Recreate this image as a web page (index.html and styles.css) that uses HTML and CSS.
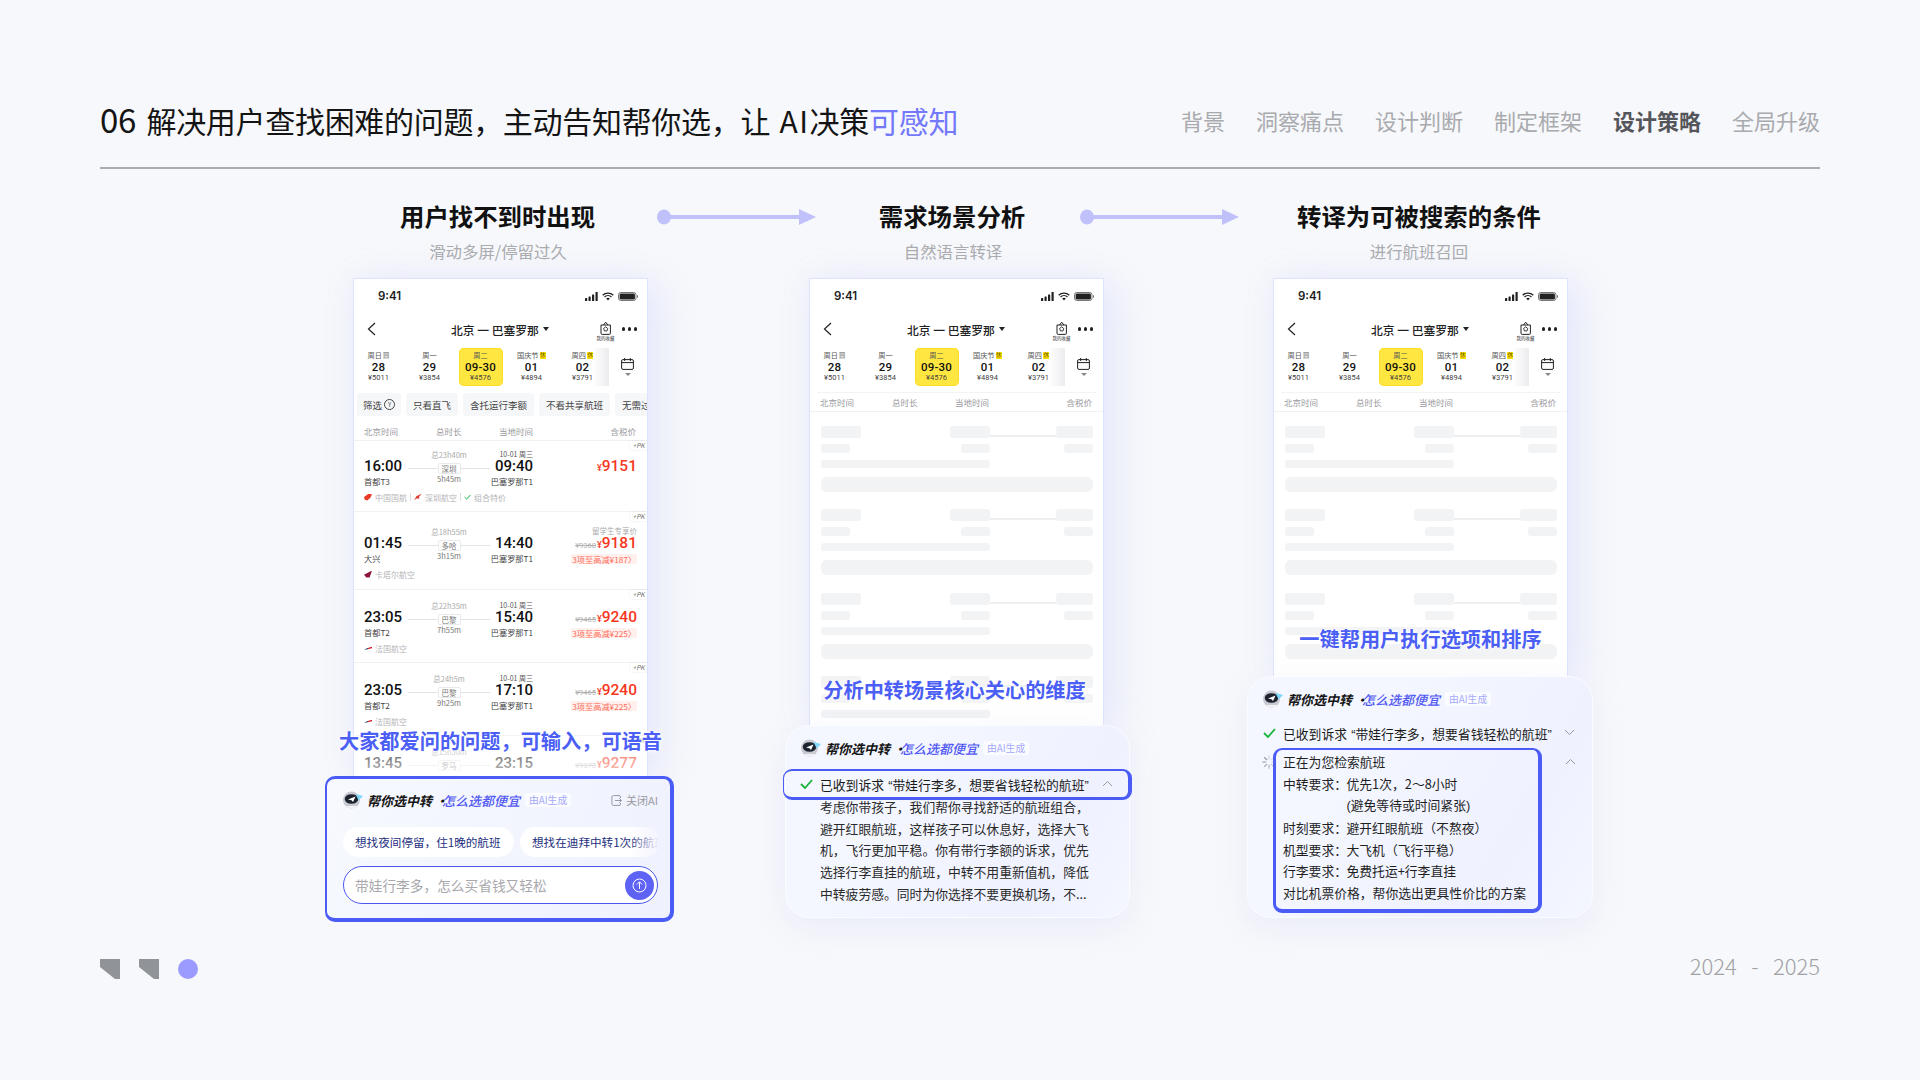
FILE: index.html
```html
<!DOCTYPE html>
<html lang="zh-CN">
<head>
<meta charset="utf-8">
<title>解决用户查找困难的问题</title>
<link rel="stylesheet" href="styles.css">
</head>
<body>
<svg class="defs" aria-hidden="true">
  <symbol id="i-back" viewBox="0 0 9 14"><path d="M8 1 1.5 7 8 13" fill="none" stroke="#222" stroke-width="1.2"/></symbol>
  <symbol id="i-signal" viewBox="0 0 13 9"><rect x="0" y="6" width="2.2" height="3" rx=".5" fill="#222"/><rect x="3.5" y="4.5" width="2.2" height="4.5" rx=".5" fill="#222"/><rect x="7" y="2.5" width="2.2" height="6.5" rx=".5" fill="#222"/><rect x="10.5" y="0" width="2.2" height="9" rx=".5" fill="#222"/></symbol>
  <symbol id="i-wifi" viewBox="0 0 12 9"><path d="M.7 3.2a7.6 7.6 0 0 1 10.6 0M2.5 5a5 5 0 0 1 7 0" fill="none" stroke="#222" stroke-width="1.3"/><path d="M4.2 6.6a2.6 2.6 0 0 1 3.6 0L6 8.6z" fill="#222"/></symbol>
  <symbol id="i-batt" viewBox="0 0 20 9"><rect x=".5" y=".5" width="17.5" height="8" rx="2.2" fill="none" stroke="#777"/><rect x="1.6" y="1.6" width="15.3" height="5.8" rx="1.2" fill="#222"/><path d="M19 3v3a1.6 1.6 0 0 0 0-3z" fill="#777"/></symbol>
  <symbol id="i-bag" viewBox="0 0 11 14"><path d="M1 4h9.4v8.2a1.2 1.2 0 0 1-1.2 1.2H2.2A1.2 1.2 0 0 1 1 12.200zM3.500 4 5.700 1.200 7.900 4" fill="none" stroke="#222" stroke-width="1"/><path d="m5.700 5.800 2 1.600-.7 2.500H4.400l-.7-2.500z" fill="none" stroke="#222" stroke-width=".9"/></symbol>
  <symbol id="i-cal" viewBox="0 0 13 12"><rect x=".6" y="1.600" width="11.800" height="9.800" rx="1.400" fill="none" stroke="#222" stroke-width="1"/><path d="M.6 4.600h11.800M3.700 0v3M9.300 0v3" stroke="#222" stroke-width="1" fill="none"/></symbol>
  <symbol id="i-robot" viewBox="0 0 20 18">
    <circle cx="8.500" cy="9" r="8.500" fill="#c9c9d1"/>
    <path d="M3 15a8.300 8.300 0 0 0 11.500 0z" fill="#f3f3f6"/>
    <ellipse cx="8.500" cy="8" rx="6.800" ry="4.800" fill="#1d2430"/>
    <path d="M5 8.500 12.500 5.500 10 11 8.500 9.200z" fill="#fff"/>
    <path d="M12.500 3 20 5 15.500 9.500 14 6z" fill="#7fd6fb"/>
  </symbol>
  <symbol id="i-check" viewBox="0 0 13 10"><path d="m1 5 4 4 7-8" fill="none" stroke="#17b33b" stroke-width="1.800"/></symbol>
  <symbol id="i-up" viewBox="0 0 11 7"><path d="m1 6 4.500-4.500L10 6" fill="none" stroke="#999" stroke-width="1"/></symbol>
  <symbol id="i-down" viewBox="0 0 11 7"><path d="m1 1 4.500 4.500L10 1" fill="none" stroke="#999" stroke-width="1"/></symbol>
  <symbol id="i-arrow" viewBox="0 0 159 16"><ellipse cx="7" cy="8" rx="7" ry="7.500" fill="#c0c1fb"/><rect x="7" y="6" width="136" height="4" fill="#c0c1fb"/><path d="M142 0 159 8 142 16z" fill="#c0c1fb"/></symbol>
  <symbol id="i-close" viewBox="0 0 11 11"><path d="M9.500 3V2A1.500 1.500 0 0 0 8 .6H2.400A1.500 1.500 0 0 0 .9 2v7a1.500 1.500 0 0 0 1.500 1.400H8A1.500 1.500 0 0 0 9.500 9V8" fill="none" stroke="#9a9aa0"/><path d="M4 5.500h6.500M8.300 3.500l2.200 2-2.200 2" fill="none" stroke="#9a9aa0"/></symbol>
</svg>

<main class="slide">
  <header class="top">
    <h1 class="heading"><span class="num">06</span> 解决用户查找困难的问题，主动告知帮你选，让 <span class="ai">AI</span>决策<em>可感知</em></h1>
    <nav class="tabs">
      <span>背景</span><span>洞察痛点</span><span>设计判断</span><span>制定框架</span><span class="tab-on">设计策略</span><span>全局升级</span>
    </nav>
  </header>

  <section class="steps">
    <div class="step step-a"><h2>用户找不到时出现</h2><p>滑动多屏/停留过久</p></div>
    <svg class="arrow arrow-a"><use href="#i-arrow"/></svg>
    <div class="step step-b"><h2>需求场景分析</h2><p>自然语言转译</p></div>
    <svg class="arrow arrow-b"><use href="#i-arrow"/></svg>
    <div class="step step-c"><h2>转译为可被搜索的条件</h2><p>进行航班召回</p></div>
  </section>

  <section class="stage">
    <!-- column 1 -->
    <div class="col col-a">
      <div class="phone-wrap">
        <div class="phone phone-a">
          <div class="status"><b>9:41</b><span class="status-icons"><svg class="ic-signal"><use href="#i-signal"/></svg><svg class="ic-wifi"><use href="#i-wifi"/></svg><svg class="ic-batt"><use href="#i-batt"/></svg></span></div>
          <div class="navbar"><svg class="ic-back"><use href="#i-back"/></svg><div class="route-title">北京 一 巴塞罗那<i class="tri"></i></div><div class="fav"><svg class="ic-bag"><use href="#i-bag"/></svg><small>我的收藏</small></div><div class="dots"><i></i><i></i><i></i></div></div>
          <div class="dates">
            <div class="day"><span>周日<u class="off">回</u></span><b>28</b><em>¥5011</em></div>
            <div class="day"><span>周一</span><b>29</b><em>¥3854</em></div>
            <div class="day day-on"><span>周二</span><b>09-30</b><em>¥4576</em></div>
            <div class="day"><span>国庆节<u class="rest">休</u></span><b>01</b><em>¥4894</em></div>
            <div class="day"><span>周四<u class="rest">休</u></span><b>02</b><em>¥3791</em></div>
            <div class="cal"><svg class="ic-cal"><use href="#i-cal"/></svg><i class="tri tri-grey"></i></div>
          </div>
          <div class="filters">
            <span class="chip chip-first">筛选<i class="ring">Y</i></span><span class="chip">只看直飞</span><span class="chip">含托运行李额</span><span class="chip">不看共享航班</span><span class="chip">无需过境签</span>
          </div>
          <div class="thead thead-a"><span>北京时间</span><span>总时长</span><span>当地时间</span><span class="r">含税价</span></div>

          <div class="flight f-first">
            <i class="pk">+PK</i>
            <span class="depart">16:00</span><span class="dep-sub">首都T3</span>
            <div class="mid"><span>总23h40m</span><div class="route"><u>深圳</u></div><span>5h45m</span></div>
            <span class="arr-date">10-01 周三</span><span class="arrive">09:40</span><span class="arr-sub">巴塞罗那T1</span>
            <div class="price price-solo"><em>¥</em><b>9151</b></div>
            <div class="air"><i class="logo logo-ca"></i>中国国航<s></s><i class="logo logo-zh"></i>深圳航空<s></s><svg class="ic-tick"><use href="#i-check"/></svg>组合特价</div>
          </div>
          <div class="flight f-tall">
            <i class="pk">+PK</i>
            <span class="depart">01:45</span><span class="dep-sub">大兴</span>
            <div class="mid"><span>总18h55m</span><div class="route"><u>多哈</u></div><span>3h15m</span></div>
            <span class="arrive">14:40</span><span class="arr-sub">巴塞罗那T1</span>
            <span class="price-note">留学生专享价</span>
            <div class="price"><del>¥9368</del><em>¥</em><b>9181</b></div>
            <span class="promo">3项至高减¥187〉</span>
            <div class="air"><i class="logo logo-qr"></i>卡塔尔航空</div>
          </div>
          <div class="flight">
            <i class="pk">+PK</i>
            <span class="depart">23:05</span><span class="dep-sub">首都T2</span>
            <div class="mid"><span>总22h35m</span><div class="route"><u>巴黎</u></div><span>7h55m</span></div>
            <span class="arr-date">10-01 周三</span><span class="arrive">15:40</span><span class="arr-sub">巴塞罗那T1</span>
            <div class="price"><del>¥9465</del><em>¥</em><b>9240</b></div>
            <span class="promo">3项至高减¥225〉</span>
            <div class="air"><i class="logo logo-af"></i>法国航空</div>
          </div>
          <div class="flight">
            <i class="pk">+PK</i>
            <span class="depart">23:05</span><span class="dep-sub">首都T2</span>
            <div class="mid"><span>总24h5m</span><div class="route"><u>巴黎</u></div><span>9h25m</span></div>
            <span class="arr-date">10-01 周三</span><span class="arrive">17:10</span><span class="arr-sub">巴塞罗那T1</span>
            <div class="price"><del>¥9465</del><em>¥</em><b>9240</b></div>
            <span class="promo">3项至高减¥225〉</span>
            <div class="air"><i class="logo logo-af"></i>法国航空</div>
          </div>
          <div class="flight">
            <i class="pk">+PK</i>
            <span class="depart">13:45</span>
            <div class="mid"><span>总15h30m</span><div class="route"><u>罗马</u></div></div>
            <span class="arrive">23:15</span>
            <div class="price"><del>¥9372</del><em>¥</em><b>9277</b></div>
          </div>
        </div>
        <p class="caption">大家都爱问的问题，可输入，可语音</p>
      </div>
      <div class="panel panel-a">
        <div class="ai-head">
          <svg class="ic-robot"><use href="#i-robot"/></svg>
          <strong>帮你选中转 ·</strong><strong class="hl">怎么选都便宜</strong><span class="ai-tag">由AI生成</span>
          <span class="close"><svg class="ic-close"><use href="#i-close"/></svg>关闭AI</span>
        </div>
        <div class="asks">
          <span class="ask ask-one">想找夜间停留，住1晚的航班</span>
          <span class="ask ask-two">想找在迪拜中转1次的航班</span>
        </div>
        <div class="input">
          <span>带娃行李多，怎么买省钱又轻松</span>
          <svg class="send" viewBox="0 0 29 29"><circle cx="14.500" cy="14.500" r="14.500" fill="#5e62f5"/><circle cx="14.500" cy="14.500" r="6.500" fill="none" stroke="#fff" stroke-width="1"/><path d="M14.500 18v-7M11.800 13.500l2.700-2.700 2.700 2.700" fill="none" stroke="#fff" stroke-width="1"/></svg>
        </div>
      </div>
    </div>

    <!-- column 2 -->
    <div class="col col-b">
      <div class="phone-wrap">
        <div class="phone phone-b">
          <div class="status"><b>9:41</b><span class="status-icons"><svg class="ic-signal"><use href="#i-signal"/></svg><svg class="ic-wifi"><use href="#i-wifi"/></svg><svg class="ic-batt"><use href="#i-batt"/></svg></span></div>
          <div class="navbar"><svg class="ic-back"><use href="#i-back"/></svg><div class="route-title">北京 一 巴塞罗那<i class="tri"></i></div><div class="fav"><svg class="ic-bag"><use href="#i-bag"/></svg><small>我的收藏</small></div><div class="dots"><i></i><i></i><i></i></div></div>
          <div class="dates">
            <div class="day"><span>周日<u class="off">回</u></span><b>28</b><em>¥5011</em></div>
            <div class="day"><span>周一</span><b>29</b><em>¥3854</em></div>
            <div class="day day-on"><span>周二</span><b>09-30</b><em>¥4576</em></div>
            <div class="day"><span>国庆节<u class="rest">休</u></span><b>01</b><em>¥4894</em></div>
            <div class="day"><span>周四<u class="rest">休</u></span><b>02</b><em>¥3791</em></div>
            <div class="cal"><svg class="ic-cal"><use href="#i-cal"/></svg><i class="tri tri-grey"></i></div>
          </div>
          <div class="rule"></div>
          <div class="thead"><span>北京时间</span><span>总时长</span><span>当地时间</span><span class="r">含税价</span></div>
          <div class="skeletons">
            <div class="sk"><div class="sk-top"><i class="a"></i><i class="b"></i><i class="ln"></i><i class="c"></i></div><div class="sk-mid"><i class="a"></i><i class="b"></i><i class="c"></i></div><i class="sk-line"></i><i class="sk-big"></i></div>
            <div class="sk"><div class="sk-top"><i class="a"></i><i class="b"></i><i class="ln"></i><i class="c"></i></div><div class="sk-mid"><i class="a"></i><i class="b"></i><i class="c"></i></div><i class="sk-line"></i><i class="sk-big"></i></div>
            <div class="sk"><div class="sk-top"><i class="a"></i><i class="b"></i><i class="ln"></i><i class="c"></i></div><div class="sk-mid"><i class="a"></i><i class="b"></i><i class="c"></i></div><i class="sk-line"></i><i class="sk-big"></i></div>
            <div class="sk"><div class="sk-top"><i class="a"></i><i class="b"></i><i class="ln"></i><i class="c"></i></div><div class="sk-mid"><i class="a"></i><i class="b"></i><i class="c"></i></div><i class="sk-line"></i><i class="sk-big"></i></div>
          </div>
        </div>
        <p class="caption caption-b">分析中转场景核心关心的维度</p>
      </div>
      <div class="panel panel-b">
        <div class="ai-head">
          <svg class="ic-robot"><use href="#i-robot"/></svg>
          <strong>帮你选中转 ·</strong><strong class="hl">怎么选都便宜</strong><span class="ai-tag">由AI生成</span>
        </div>
        <div class="got got-box">
          <svg class="ic-check"><use href="#i-check"/></svg>
          <span>已收到诉求<span class="qm qm-o">“</span>带娃行李多，想要省钱轻松的航班<span class="qm">”</span></span>
          <svg class="ic-chev"><use href="#i-up"/></svg>
        </div>
        <p class="answer">考虑你带孩子，我们帮你寻找舒适的航班组合，<br>避开红眼航班，这样孩子可以休息好，选择大飞<br>机，飞行更加平稳。你有带行李额的诉求，优先<br>选择行李直挂的航班，中转不用重新值机，降低<br>中转疲劳感。同时为你选择不要更换机场，不...</p>
      </div>
    </div>

    <!-- column 3 -->
    <div class="col col-c">
      <div class="phone-wrap">
        <div class="phone phone-c">
          <div class="status"><b>9:41</b><span class="status-icons"><svg class="ic-signal"><use href="#i-signal"/></svg><svg class="ic-wifi"><use href="#i-wifi"/></svg><svg class="ic-batt"><use href="#i-batt"/></svg></span></div>
          <div class="navbar"><svg class="ic-back"><use href="#i-back"/></svg><div class="route-title">北京 一 巴塞罗那<i class="tri"></i></div><div class="fav"><svg class="ic-bag"><use href="#i-bag"/></svg><small>我的收藏</small></div><div class="dots"><i></i><i></i><i></i></div></div>
          <div class="dates">
            <div class="day"><span>周日<u class="off">回</u></span><b>28</b><em>¥5011</em></div>
            <div class="day"><span>周一</span><b>29</b><em>¥3854</em></div>
            <div class="day day-on"><span>周二</span><b>09-30</b><em>¥4576</em></div>
            <div class="day"><span>国庆节<u class="rest">休</u></span><b>01</b><em>¥4894</em></div>
            <div class="day"><span>周四<u class="rest">休</u></span><b>02</b><em>¥3791</em></div>
            <div class="cal"><svg class="ic-cal"><use href="#i-cal"/></svg><i class="tri tri-grey"></i></div>
          </div>
          <div class="rule"></div>
          <div class="thead"><span>北京时间</span><span>总时长</span><span>当地时间</span><span class="r">含税价</span></div>
          <div class="skeletons">
            <div class="sk"><div class="sk-top"><i class="a"></i><i class="b"></i><i class="ln"></i><i class="c"></i></div><div class="sk-mid"><i class="a"></i><i class="b"></i><i class="c"></i></div><i class="sk-line"></i><i class="sk-big"></i></div>
            <div class="sk"><div class="sk-top"><i class="a"></i><i class="b"></i><i class="ln"></i><i class="c"></i></div><div class="sk-mid"><i class="a"></i><i class="b"></i><i class="c"></i></div><i class="sk-line"></i><i class="sk-big"></i></div>
            <div class="sk"><div class="sk-top"><i class="a"></i><i class="b"></i><i class="ln"></i><i class="c"></i></div><div class="sk-mid"><i class="a"></i><i class="b"></i><i class="c"></i></div><i class="sk-line"></i><i class="sk-big"></i></div>
          </div>
        </div>
        <p class="caption caption-c">一键帮用户执行选项和排序</p>
      </div>
      <div class="panel panel-c">
        <div class="ai-head">
          <svg class="ic-robot"><use href="#i-robot"/></svg>
          <strong>帮你选中转 ·</strong><strong class="hl">怎么选都便宜</strong><span class="ai-tag">由AI生成</span>
        </div>
        <div class="got">
          <svg class="ic-check"><use href="#i-check"/></svg>
          <span>已收到诉求<span class="qm qm-o">“</span>带娃行李多，想要省钱轻松的航班<span class="qm">”</span></span>
          <svg class="ic-chev"><use href="#i-down"/></svg>
        </div>
        <div class="search">
          <svg class="spinner" viewBox="0 0 14 14"><g stroke="#8a8a92" stroke-width="1.200" stroke-linecap="round"><path d="M7 .8v3" opacity=".35"/><path d="m11.400 2.600-2.100 2.100" opacity=".25"/><path d="M13.200 7h-3" opacity=".3"/><path d="m11.400 11.400-2.100-2.100" opacity=".45"/><path d="M7 13.200v-3" opacity=".6"/><path d="m2.600 11.400 2.100-2.100" opacity=".75"/><path d="M.8 7h3" opacity=".9"/><path d="m2.600 2.600 2.100 2.100"/></g></svg>
          <div class="search-box">
            <p>正在为您检索航班</p>
            <p><span class="k">中转要求：</span>优先1次，2～8小时</p>
            <p><span class="k"></span><span class="paren">(</span>避免等待或时间紧张<span class="paren">)</span></p>
            <p><span class="k">时刻要求：</span>避开红眼航班（不熬夜）</p>
            <p><span class="k">机型要求：</span>大飞机（飞行平稳）</p>
            <p><span class="k">行李要求：</span>免费托运+行李直挂</p>
            <p>对比机票价格，帮你选出更具性价比的方案</p>
          </div>
          <svg class="ic-chev ic-chev-search"><use href="#i-up"/></svg>
        </div>
      </div>
    </div>
  </section>

  <footer class="foot">
    <div class="marks"><i class="mark"></i><i class="mark"></i><i class="mark-dot"></i></div>
    <span class="years">2024 - 2025</span>
  </footer>
</main>
</body>
</html>
```

FILE: styles.css
```css
* { box-sizing: border-box; }
html, body { margin: 0; padding: 0; }
body {
  width: 1920px;
  height: 1080px;
  overflow: hidden;
  background: #f7f8fb;
  color: #111;
  font-family: "Noto Sans CJK SC", "Noto Sans", sans-serif;
}
h1, h2, p { margin: 0; font-weight: 400; }
i, em, u { font-style: normal; text-decoration: none; }
.defs { position: absolute; width: 0; height: 0; }

.slide { padding: 98px 100px 0; }

/* header */
.top {
  display: flex;
  justify-content: space-between;
  align-items: center;
  height: 71px;
  padding-bottom: 25px;
  border-bottom: 2px solid #abacb0;
}
.heading { height: 44px; font-size: 30px; line-height: 44px; color: #141414; white-space: nowrap; font-weight: 400; letter-spacing: -.3px; word-spacing: 3px; }
.heading .num { margin-right: 1px; font-size: 33px; line-height: 1; }
.heading .ai { letter-spacing: 1.500px; }
.heading em { color: #7478fb; }
.tabs { display: flex; gap: 31px; font-size: 22px; line-height: 44px; color: #a9aaae; font-weight: 400; }
.tab-on { color: #55565b; font-weight: 700; }

/* steps row */
.steps { display: flex; align-items: flex-start; margin-top: 30px; text-align: center; }
.step h2 { font-size: 24.400px; line-height: 34px; font-weight: 700; color: #111; white-space: nowrap; }
.step p { margin-top: 8px; padding-left: 2px; font-size: 16.400px; line-height: 20px; color: #aaabae; white-space: nowrap; }
.step-a { width: 194px; margin-left: 300px; }
.step-b { width: 148px; margin-left: 62px; }
.step-c { width: 242px; margin-left: 58px; }
.arrow { width: 159px; height: 16px; margin-top: 10px; flex: none; }
.arrow-a { margin-left: 63px; }
.arrow-b { margin-left: 54px; }

/* stage */
.stage { display: flex; align-items: flex-start; margin-top: 17px; padding-left: 225px; }
.col { flex: none; }
.col-a { width: 349px; }
.col-b { width: 345px; margin-left: 111px; }
.col-c { width: 346px; margin-left: 117px; }

.phone-wrap { position: relative; width: 295px; }
.col-a .phone-wrap { margin-left: 28px; }
.col-b .phone-wrap { margin-left: 24px; }
.col-c .phone-wrap { margin-left: 26px; }
.phone {
  position: relative;
  overflow: hidden;
  background: #fff;
  border: solid #dde2ff;
  border-width: 1px 1px 0;
  box-shadow: 14px 6px 36px rgba(190, 196, 255, .28), -6px 0 30px rgba(200, 205, 255, .14);
}
.phone-a { height: 498px; }
.phone-b { height: 447px; }
.phone-c { height: 398px; }
.phone-a::after {
  content: "";
  position: absolute;
  left: 0; right: 0; bottom: 0;
  height: 42px;
  background: linear-gradient(rgba(255,255,255,.1), rgba(255,255,255,.75));
}
.caption {
  position: absolute;
  left: 50%;
  bottom: 21px;
  transform: translateX(-50%);
  font-size: 20.200px;
  line-height: 28px;
  font-weight: 700;
  color: #4c5ff5;
  white-space: nowrap;
  text-shadow: 0 0 3px #fff, 0 0 6px rgba(255,255,255,.9);
  z-index: 2;
}
.caption-b { left: calc(50% - 2px); }
.caption-c { bottom: 23px; }

/* phone chrome */
.status { display: flex; justify-content: space-between; align-items: center; height: 34px; padding: 0 9px 0 24px; }
.status b { font-family: Inter, Roboto, sans-serif; font-size: 11.500px; font-weight: 600; color: #1c1c1c; }
.status-icons { display: flex; align-items: center; gap: 4px; }
.ic-signal { width: 13px; height: 9px; }
.ic-wifi { width: 12px; height: 9px; }
.ic-batt { width: 20px; height: 9px; }

.navbar { display: flex; align-items: center; height: 32px; padding: 0 10px 0 13px; }
.ic-back { width: 9px; height: 14px; flex: none; }
.route-title { display: flex; align-items: center; margin-left: 75px; font-size: 11.800px; font-weight: 500; color: #222; white-space: nowrap; }
.tri { display: block; width: 0; height: 0; margin-left: 4px; border: solid transparent; border-width: 4px 3px 0; border-top-color: #222; }
.tri-grey { margin: 3px 0 0; border-top-color: #888; border-width: 3.500px 3.500px 0; }
.fav { display: flex; flex-direction: column; align-items: center; width: 20px; margin-left: auto; padding-top: 3px; }
.ic-bag { width: 11px; height: 14px; }
.fav small { font-size: 4.500px; line-height: 6px; color: #333; white-space: nowrap; margin-top: 0; }
.dots { display: flex; gap: 2.500px; margin-left: 6px; }
.dots i { width: 3.500px; height: 3.500px; border-radius: 50%; background: #222; }

.dates { position: relative; display: grid; grid-template-columns: repeat(5, 51px) 1fr; height: 38px; margin: 3px 0 0 -1px; }
.dates::after {
  content: "";
  position: absolute;
  left: 240px; top: 0; bottom: 0;
  width: 16px;
  background: linear-gradient(90deg, rgba(235,235,238,0), rgba(235,235,238,.95));
}
.day { display: flex; flex-direction: column; align-items: center; height: 38px; padding-top: 1px; white-space: nowrap; }
.day span { display: flex; align-items: center; height: 12px; font-size: 7.200px; color: #555; }
.day b { font-family: Roboto, sans-serif; font-size: 11.500px; line-height: 13px; font-weight: 500; color: #111; letter-spacing: .2px; }
.day em { font-family: Roboto, sans-serif; font-size: 7.500px; line-height: 10px; color: #444; margin-top: -1px; }
.day-on { width: 44px; margin-left: 3.500px; background: #ffe640; border-radius: 5px; box-shadow: inset 0 0 0 1px #ffde2a; }
.off { margin-left: 1px; padding: 0 .5px; font-size: 5.500px; line-height: 7px; color: #777; background: #ddd; }
.rest { margin-left: 1px; padding: 0 .5px; font-size: 5.500px; line-height: 7px; color: #6a5a00; background: #ffe100; }
.cal { display: flex; flex-direction: column; align-items: center; padding-top: 10px; }
.ic-cal { width: 13px; height: 12px; }

.filters { display: flex; gap: 5px; height: 23px; margin-top: 7px; padding-left: 3px; white-space: nowrap; }
.chip { display: flex; align-items: center; flex: none; padding: 0 7px; border-radius: 3px; background: #f6f7f9; font-size: 9.500px; color: #444; }
.chip-first { padding: 0 6px; gap: 2px; }
.ring { display: block; width: 11px; height: 11px; border: 1px solid #444; border-radius: 50%; font-size: 6px; line-height: 9px; text-align: center; }

.thead {
  display: grid;
  grid-template-columns: 72px 63px 1fr auto;
  align-items: center;
  height: 19px;
  padding: 0 11px 0 10px;
  border-bottom: 1px solid #f0f1f3;
  font-size: 8.500px;
  color: #9a9a9e;
  white-space: nowrap;
}
.thead .r { justify-self: end; }
.thead-a { height: 20px; margin-top: 5px; }
.rule { height: 1px; margin: 6px 7px 0; background: #f2f3f5; }

/* flights */
.flight {
  position: relative;
  display: grid;
  grid-template-columns: 44px 82px 43px 1fr;
  grid-template-rows: 10px 15px 15px auto;
  height: 73px;
  padding: 10px 10px 0 10px;
  border-bottom: 1px solid #f1f2f4;
  white-space: nowrap;
}
.f-first { height: 71px; padding-top: 8px; }
.f-tall { height: 78px; padding-top: 14px; }
.depart, .arrive { grid-row: 2; font-family: Roboto, sans-serif; font-size: 15px; line-height: 15px; font-weight: 500; color: #111; }
.depart { grid-column: 1; }
.arrive { grid-column: 3; justify-self: end; }
.dep-sub, .arr-sub { grid-row: 3; font-size: 8.200px; line-height: 15px; color: #444; }
.dep-sub { grid-column: 1; }
.arr-sub { grid-column: 3; justify-self: end; }
.arr-date { grid-row: 1; grid-column: 3; justify-self: end; font-size: 7px; line-height: 10px; color: #555; }
.mid { grid-column: 2; grid-row: 1 / 4; display: flex; flex-direction: column; align-items: center; padding-top: 1px; font-size: 7.500px; line-height: 10px; color: #aaa; }
.mid > span:last-child { color: #777; }
.route { position: relative; display: flex; justify-content: center; width: 82px; height: 11px; margin-top: 3px; }
.route::before { content: ""; position: absolute; left: 0; right: 0; top: 5px; height: 1px; background: #e2e3e6; }
.route u { position: relative; padding: 0 3px; border: 1px solid #e9eaec; border-radius: 2px; background: #fff; font-size: 7.500px; line-height: 9px; color: #777; }
.price { grid-column: 4; grid-row: 2; justify-self: end; display: flex; align-items: baseline; line-height: 15px; }
.price b { font-family: Roboto, sans-serif; font-size: 15.500px; font-weight: 500; color: #f5371e; }
.price em { font-family: Roboto, sans-serif; font-size: 9px; font-weight: 500; color: #f5371e; }
.price del { margin-right: 1px; font-family: Roboto, sans-serif; font-size: 7.500px; color: #b0b0b0; }
.price-note { grid-column: 4; grid-row: 1; justify-self: end; font-size: 7.500px; line-height: 10px; color: #aaa; }
.promo { grid-column: 4; grid-row: 3; justify-self: end; align-self: center; height: 10px; padding: 0 1px; border-radius: 1px; background: #fff0ee; font-size: 8.200px; line-height: 10px; color: #ff6a55; }
.air { grid-column: 1 / -1; grid-row: 4; display: flex; align-items: center; margin-top: 2px; height: 12px; font-size: 8px; color: #b5b5b8; }
.air s { width: 1px; height: 8px; margin: 0 3px; background: #ddd; }
.logo { width: 8px; height: 7px; margin-right: 3px; }
.logo-ca { background: #ea3a2a; clip-path: polygon(0 50%, 60% 0, 100% 10%, 80% 60%, 40% 100%, 10% 90%); }
.logo-zh { background: #e0332a; clip-path: polygon(0 100%, 30% 40%, 100% 0, 60% 50%, 70% 70%, 30% 70%); }
.logo-qr { background: #8a1538; clip-path: polygon(0 60%, 100% 0, 70% 100%, 30% 100%); }
.logo-af { height: 3px; background: linear-gradient(90deg, #17295f 50%, #d8222a 50%); clip-path: polygon(0 100%, 100% 0, 100% 60%, 30% 100%); }
.ic-tick { width: 7px; height: 6px; margin-right: 3px; }
.pk {
  position: absolute;
  right: 0; top: 0;
  width: 17px; height: 9px;
  border-radius: 0 0 0 2px;
  background: #fff;
  box-shadow: 0 0 2px rgba(0,0,0,.12);
  font-size: 6.500px;
  line-height: 9px;
  font-style: italic;
  text-align: center;
  color: #666;
}

/* skeleton */
.skeletons { padding: 14px 10px 0 11px; }
.sk { display: flex; flex-direction: column; height: 83.330px; }
.sk i { display: block; background: #f2f3f5; border-radius: 3px; }
.sk-top, .sk-mid { display: flex; }
.sk-top i { height: 12px; }
.sk-top .a { width: 40px; }
.sk-top .b { width: 40px; margin-left: 89px; }
.sk-top .ln { width: 66px; height: 2px; margin-top: 9px; border-radius: 0; background: #eceef0; }
.sk-top .c { width: 37px; }
.sk-mid { margin-top: 6px; }
.sk-mid i { width: 29px; height: 9px; }
.sk-mid .b { margin-left: 111px; }
.sk-mid .c { margin-left: 74px; }
.sk-line { width: 169px; height: 8px; margin-top: 7px; }
.sk .sk-big { width: 272px; height: 15px; margin-top: 9px; border-radius: 6px; }

/* panels */
.panel { position: relative; }
.panel-a {
  height: 146px;
  padding: 9px 12px 0 16px;
  border: solid #4a5cf5;
  border-width: 3px 4px 4px 2px;
  border-radius: 10px;
  background: linear-gradient(110deg, #f7f9ff, #eff1fe);
}
.panel-b, .panel-c {
  border: 1px solid #fbfcff;
  border-radius: 24px;
  background: linear-gradient(120deg, #f4f7ff 30%, #eff1ff 75%, #f4f6ff);
  box-shadow: 0 10px 30px rgba(205, 210, 250, .3);
}
.panel-b { height: 193px; padding-top: 10px; }
.panel-c { height: 242px; padding-top: 10px; }
.ai-head { display: flex; align-items: center; height: 24px; font-size: 13px; white-space: nowrap; }
.panel-b .ai-head { padding-left: 15px; }
.panel-c .ai-head { padding-left: 15px; }
.ic-robot { width: 20px; height: 18px; margin-right: 4px; flex: none; }
.ai-head strong { font-style: italic; font-weight: 700; color: #141414; }
.ai-head .hl { margin-left: -6px; font-weight: 500; color: #5158f2; }
.ai-tag { margin-left: 5px; padding: 0 4px; border-radius: 3px; background: #fbfcff; font-size: 9.800px; line-height: 14px; color: #a6abfa; }
.close { display: flex; align-items: center; gap: 4px; margin-left: auto; font-size: 11px; color: #9a9aa0; }
.ic-close { width: 11px; height: 11px; }
.asks { display: flex; gap: 6px; height: 30px; margin-top: 15px; overflow: hidden; }
.ask { display: flex; align-items: center; flex: none; height: 30px; border-radius: 15px; background: #fff; font-size: 11.600px; color: #242e80; white-space: nowrap; overflow: hidden; position: relative; }
.ask-one { width: 171px; padding-left: 12px; }
.ask-two { width: 139px; padding-left: 12px; }
.ask-two::after { content: ""; position: absolute; right: 0; top: 0; bottom: 0; width: 30px; background: linear-gradient(90deg, rgba(245,246,254,0), #f3f4fe); }
.input {
  display: flex;
  align-items: center;
  justify-content: space-between;
  height: 38px;
  margin-top: 9px;
  padding: 0 3px 0 11px;
  border: 1.500px solid #4a58f0;
  border-radius: 19px;
  background: #fff;
  font-size: 13.700px;
  color: #a8a8ad;
  white-space: nowrap;
}
.send { width: 29px; height: 29px; }

.got { position: relative; display: flex; align-items: center; height: 22px; margin-top: 11px; padding-left: 15px; font-size: 12.800px; white-space: nowrap; color: #1a1a1a; }
.qm { display: inline-block; width: 8.500px; font-family: "Liberation Sans", sans-serif; text-align: left; }
.qm-o { text-align: right; }
.paren { font-family: "Liberation Sans", sans-serif; }
.ic-check { width: 13px; height: 10px; flex: none; margin-right: 7px; }
.ic-chev { width: 11px; height: 7px; flex: none; }
.got .ic-chev { position: absolute; left: 316px; top: 7px; }
.got-box {
  z-index: 1;
  width: 349px;
  height: 31px;
  margin: 9px 0 0 -3px;
  padding-left: 16px;
  border: solid #4a5cf5;
  border-width: 2px 4px 3px 1px;
  border-radius: 9px;
}
.got-box .ic-chev { left: 318px; top: 9px; }
.answer { margin-top: -4px; padding-left: 34px; font-size: 12.800px; line-height: 21.700px; color: #2a2a2a; white-space: nowrap; }

.search { display: flex; align-items: flex-start; margin-top: 4px; padding-left: 14px; }
.spinner { width: 14px; height: 14px; margin-top: 7px; flex: none; position: relative; z-index: 1; }
.search-box {
  width: 269px;
  height: 165px;
  margin-left: -3px;
  padding: 1px 0 0 7px;
  border: solid #4a5cf5;
  border-width: 2px 4px 4px 3px;
  border-radius: 9px;
  font-size: 12.800px;
  line-height: 21.670px;
  color: #1f1f1f;
  white-space: nowrap;
}
.k { display: inline-block; width: 63.500px; }
.ic-chev-search { margin: 10px 0 0 23px; }

/* footer */
.foot { display: flex; justify-content: space-between; align-items: flex-start; margin-top: 37px; }
.marks { display: flex; align-items: center; gap: 19px; }
.mark { width: 20px; height: 20px; background: #909398; clip-path: polygon(0 0, 100% 0, 100% 100%, 75% 100%, 0 40%); }
.mark-dot { width: 20px; height: 20px; border-radius: 50%; background: #9b9bff; }
.years { margin-top: -7px; font-size: 22px; line-height: 26px; font-weight: 300; color: #a0a1a5; word-spacing: 9.500px; }
```
